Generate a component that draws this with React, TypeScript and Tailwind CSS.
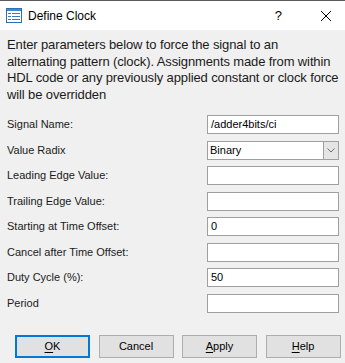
const rows: { label: string; value?: string; select?: boolean }[] = [
  { label: "Signal Name:", value: "/adder4bits/ci" },
  { label: "Value Radix", value: "Binary", select: true },
  { label: "Leading Edge Value:" },
  { label: "Trailing Edge Value:" },
  { label: "Starting at Time Offset:", value: "0" },
  { label: "Cancel after Time Offset:" },
  { label: "Duty Cycle (%):", value: "50" },
  { label: "Period" },
];

const intro = [
  "Enter parameters below to force the signal to an",
  "alternating pattern (clock). Assignments made from within",
  "HDL code or any previously applied constant or clock force",
  "will be overridden",
];

function TitleIcon() {
  return (
    <svg width="16" height="15" viewBox="0 0 16 15">
      <rect x="0.5" y="0.5" width="15" height="14" fill="#fff" stroke="#2f6db5" />
      <rect x="1" y="1" width="14" height="2" fill="#4a86c8" />
      <rect x="2" y="5" width="3" height="1" fill="#3a78c0" />
      <rect x="6" y="5" width="8" height="1" fill="#3a78c0" />
      <rect x="2" y="8" width="3" height="1" fill="#3a78c0" />
      <rect x="6" y="8" width="8" height="1" fill="#3a78c0" />
      <rect x="2" y="11" width="3" height="1" fill="#3a78c0" />
      <rect x="6" y="11" width="8" height="1" fill="#3a78c0" />
    </svg>
  );
}

export default function App() {
  return (
    <div
      className="flex h-[363px] w-[345px] flex-col overflow-hidden bg-[#f0f0f0] text-black"
      style={{ fontFamily: "Tahoma, 'Liberation Sans', sans-serif" }}
    >
      <div className="flex h-[30px] shrink-0 items-center border-t border-[#5a5a5a] bg-white">
        <div className="ml-[6px] flex items-center">
          <TitleIcon />
        </div>
        <span className="ml-[6px] text-[12px]">Define Clock</span>
        <span className="ml-auto mr-[38px] text-[13px]">?</span>
        <svg width="12" height="12" viewBox="0 0 12 12" className="mr-[13px]">
          <path d="M1 1L11 11M11 1L1 11" stroke="#000" strokeWidth="1" />
        </svg>
      </div>

      {/* dialog wraps this text at fixed points */}
      <div className="mt-[7px] flex flex-col pl-[7px] text-[13px] leading-[16.5px] tracking-[-0.12px] text-[#1a1a1a]">
        {intro.map((line) => (
          <span key={line} className="whitespace-nowrap">
            {line}
          </span>
        ))}
      </div>

      <div className="mt-[12px] flex flex-col gap-[6.5px] pl-[7px] pr-[6px]">
        {rows.map((r) => (
          <div key={r.label} className="flex h-[19px] items-center justify-between">
            <span className="text-[11px] text-[#1a1a1a]">{r.label}</span>
            {r.select ? (
              <div className="flex h-[19px] w-[132px] items-stretch border border-[#a0a0a0] bg-white">
                <span className="flex flex-1 items-center pl-[2px] text-[11px]">{r.value}</span>
                <span className="flex w-[15px] items-center justify-center border-l border-[#a0a0a0] bg-[#e5e5e5]">
                  <svg width="8" height="5" viewBox="0 0 8 5">
                    <path d="M0.5 0.5L4 4L7.5 0.5" fill="none" stroke="#707070" />
                  </svg>
                </span>
              </div>
            ) : (
              <div className="flex h-[19px] w-[132px] items-center border border-[#a0a0a0] bg-white pl-[3px] text-[11px]">
                {r.value}
              </div>
            )}
          </div>
        ))}
      </div>

      <div className="mt-[22px] flex gap-[8.5px] pl-[15px]">
        {[
          { pre: "", u: "O", post: "K", def: true },
          { pre: "Cancel", u: "", post: "" },
          { pre: "", u: "A", post: "pply" },
          { pre: "", u: "H", post: "elp" },
        ].map((b) => (
          <div
            key={b.pre + b.u + b.post}
            className={`flex h-[23px] w-[75px] items-center justify-center bg-[#e1e1e1] text-[11px] ${
              b.def ? "border-2 border-[#0078d7]" : "border border-[#adadad]"
            }`}
          >
            {b.pre}
            {b.u && <span className="underline underline-offset-2">{b.u}</span>}
            {b.post}
          </div>
        ))}
      </div>
    </div>
  );
}
